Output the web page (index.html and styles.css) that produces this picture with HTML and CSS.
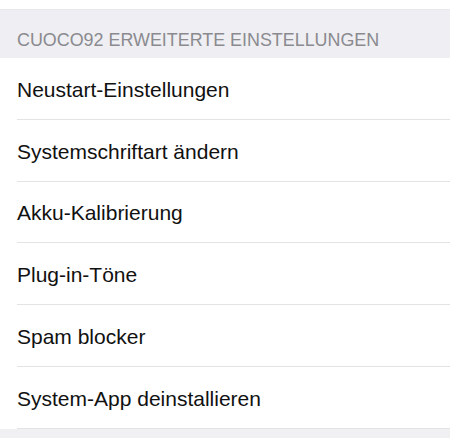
FILE: index.html
```html
<!DOCTYPE html>
<html lang="de">
<head>
<meta charset="utf-8">
<link rel="stylesheet" href="styles.css">
</head>
<body>
<div class="top"></div>
<div class="section-header">CUOCO92 ERWEITERTE EINSTELLUNGEN</div>
<ul class="list">
  <li class="row"><span>Neustart-Einstellungen</span></li>
  <li class="row"><span>Systemschriftart ändern</span></li>
  <li class="row"><span>Akku-Kalibrierung</span></li>
  <li class="row"><span>Plug-in-Töne</span></li>
  <li class="row"><span>Spam blocker</span></li>
  <li class="row"><span>System-App deinstallieren</span></li>
</ul>
<div class="bottom"></div>
</body>
</html>
```
FILE: styles.css
```css
html, body {
  margin: 0;
  padding: 0;
  background: #f0f0f3;
  font-family: "Liberation Sans", Arial, sans-serif;
}
.top {
  height: 9px;
  background: #ffffff;
}
.section-header {
  height: 49px;
  box-sizing: border-box;
  padding: 20px 0 0 17px;
  background: #efeff3;
  border-top: 1px solid #e6e8ec;
  color: #8a8a8f;
  font-size: 17.9px;
  line-height: 21px;
}
.list {
  list-style: none;
  margin: 0;
  padding: 0 0 0 17px;
  background: #ffffff;
}
.row {
  height: 61.8px;
  box-sizing: border-box;
  display: flex;
  align-items: center;
  border-bottom: 1px solid #e3e3e6;
  color: #111111;
  font-size: 21px;
  padding-top: 3px;
}
.bottom {
  height: 20px;
}
```
